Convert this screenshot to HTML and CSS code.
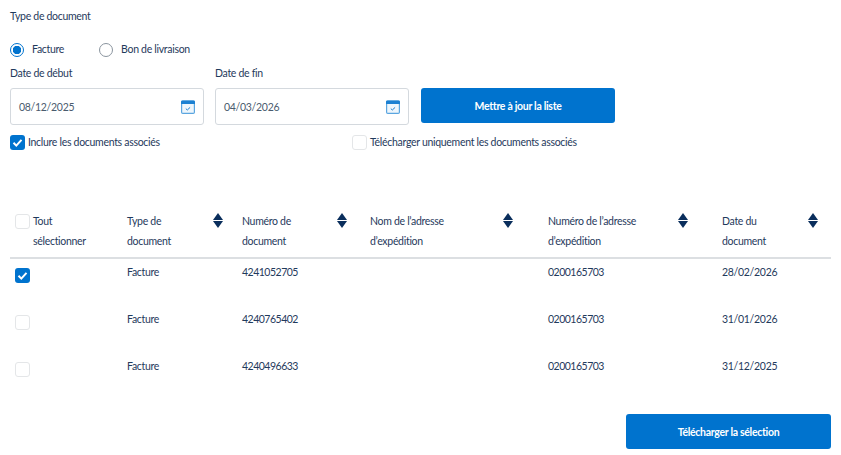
FILE: index.html
```html
<!DOCTYPE html>
<html lang="fr">

<head>
    <meta charset="UTF-8">
    <title>Documents</title>
    <link rel="stylesheet" href="styles.css">
</head>

<body>
    <div class="container">
        <div class="doc-type-label">Type de document</div>
        <div class="radios">
            <div class="radio-item checked"><span class="radio"></span>Facture</div>
            <div class="radio-item"><span class="radio"></span>Bon de livraison</div>
        </div>
        <div class="filters">
            <div class="field">
                <div class="field-label">Date de début</div>
                <div class="date-input">08/12/2025
                    <svg class="cal" viewBox="0 0 14 14"><rect x="0.6" y="1.1" width="12.8" height="12.3" rx="1.2" fill="#eef6fc" stroke="#5ba6e0" stroke-width="1.2"/><path d="M0 1.8q0-1.3 1.3-1.3h11.4q1.3 0 1.3 1.3v2.2h-14z" fill="#1b80d2"/><path d="M4.8 8.6l1.5 1.4 2.8-2.6" fill="none" stroke="#1b80d2" stroke-width="1"/></svg>
                </div>
            </div>
            <div class="field">
                <div class="field-label">Date de fin</div>
                <div class="date-input">04/03/2026
                    <svg class="cal" viewBox="0 0 14 14"><rect x="0.6" y="1.1" width="12.8" height="12.3" rx="1.2" fill="#eef6fc" stroke="#5ba6e0" stroke-width="1.2"/><path d="M0 1.8q0-1.3 1.3-1.3h11.4q1.3 0 1.3 1.3v2.2h-14z" fill="#1b80d2"/><path d="M4.8 8.6l1.5 1.4 2.8-2.6" fill="none" stroke="#1b80d2" stroke-width="1"/></svg>
                </div>
            </div>
            <button class="btn update-btn">Mettre à jour la liste</button>
        </div>
        <div class="options">
            <div class="option"><span class="check on"><svg viewBox="0 0 15 15"><path d="M3.5 7.8l2.8 2.8 5.2-5.8" fill="none" stroke="#fff" stroke-width="2"/></svg></span>Inclure les documents associés</div>
            <div class="option second"><span class="check"></span>Télécharger uniquement les documents associés</div>
        </div>

        <div class="table">
            <div class="row head">
                <div class="cell c1"><span class="check"></span><span class="head-text">Tout<br>sélectionner</span></div>
                <div class="cell c2"><span class="head-text">Type de<br>document</span><span class="sort"><i class="up"></i><i class="down"></i></span></div>
                <div class="cell c3"><span class="head-text">Numéro de<br>document</span><span class="sort"><i class="up"></i><i class="down"></i></span></div>
                <div class="cell c4"><span class="head-text">Nom de l’adresse<br>d’expédition</span><span class="sort"><i class="up"></i><i class="down"></i></span></div>
                <div class="cell c5"><span class="head-text">Numéro de l’adresse<br>d’expédition</span><span class="sort"><i class="up"></i><i class="down"></i></span></div>
                <div class="cell c6"><span class="head-text">Date du<br>document</span><span class="sort"><i class="up"></i><i class="down"></i></span></div>
            </div>
            <div class="row">
                <div class="cell c1"><span class="check on"><svg viewBox="0 0 15 15"><path d="M3.5 7.8l2.8 2.8 5.2-5.8" fill="none" stroke="#fff" stroke-width="2"/></svg></span></div>
                <div class="cell c2">Facture</div>
                <div class="cell c3 num">4241052705</div>
                <div class="cell c4"></div>
                <div class="cell c5 num">0200165703</div>
                <div class="cell c6 date">28/02/2026</div>
            </div>
            <div class="row">
                <div class="cell c1"><span class="check"></span></div>
                <div class="cell c2">Facture</div>
                <div class="cell c3 num">4240765402</div>
                <div class="cell c4"></div>
                <div class="cell c5 num">0200165703</div>
                <div class="cell c6 date">31/01/2026</div>
            </div>
            <div class="row">
                <div class="cell c1"><span class="check"></span></div>
                <div class="cell c2">Facture</div>
                <div class="cell c3 num">4240496633</div>
                <div class="cell c4"></div>
                <div class="cell c5 num">0200165703</div>
                <div class="cell c6 date">31/12/2025</div>
            </div>
        </div>

        <div class="footer">
            <button class="btn download-btn">Télécharger la sélection</button>
        </div>
    </div>
</body>

</html>
```

FILE: styles.css
```css
* {
    margin: 0;
    padding: 0;
    box-sizing: border-box;
    font-family: 'Lato', 'Liberation Sans', sans-serif;
}

body {
    background-color: white;
    color: #1f3a5c;
    font-size: 10.5px;
    letter-spacing: -0.3px;
    overflow: hidden;
}

.container {
    width: 841px;
    height: 455px;
    padding: 10px 10px 0 10px;
}

.doc-type-label {
    height: 12px;
    line-height: 12px;
}

.radios {
    display: flex;
    margin-top: 20px;
    height: 14px;
}

.radio-item {
    display: flex;
    align-items: flex-start;
    gap: 8px;
    margin-right: 35px;
    line-height: 14px;
}

.radio {
    width: 14px;
    height: 14px;
    border-radius: 50%;
    border: 1px solid #8a949e;
    margin-top: 1px;
}

.radio-item.checked .radio {
    border: 1.5px solid #0073ce;
    background: radial-gradient(circle, #0073ce 0 4px, white 4.5px);
}

.filters {
    display: flex;
    align-items: flex-end;
    gap: 11px;
    margin-top: 11px;
}

.field {
    width: 194px;
}

.field-label {
    height: 12px;
    line-height: 12px;
    margin-bottom: 9px;
}

.date-input {
    display: flex;
    align-items: center;
    justify-content: space-between;
    height: 37px;
    border: 1px solid #d4d9de;
    border-radius: 3px;
    padding: 0 8px 0 8px;
    color: #4a5b6e;
    letter-spacing: -0.3px;
}

.cal {
    width: 14px;
    height: 14px;
}

.btn {
    background-color: #0073ce;
    color: white;
    border: none;
    border-radius: 3px;
    font-size: 10.5px;
    font-weight: 700;
    letter-spacing: -0.3px;
}

.update-btn {
    width: 194px;
    height: 35px;
    margin-left: 1px;
    margin-bottom: 2px;
}

.options {
    display: flex;
    margin-top: 10px;
    height: 15px;
}

.option {
    display: flex;
    align-items: flex-start;
    gap: 3px;
    width: 342px;
    line-height: 14px;
}

.check {
    display: block;
    flex: none;
    width: 15px;
    height: 15px;
    border: 1.5px solid #e4e6e8;
    border-radius: 3px;
    background-color: white;
}

.check.on {
    background-color: #0073ce;
    border: none;
}

.check svg {
    display: block;
    width: 100%;
    height: 100%;
}

.table {
    margin-top: 48px;
}

.row {
    display: flex;
    align-items: flex-start;
    height: 47px;
    padding-top: 7px;
    line-height: 14px;
}

.row.head {
    height: 61px;
    margin-bottom: -1px;
    border-bottom: 2px solid #dcdfe2;
    line-height: 20px;
    padding-top: 15px;
}

.cell {
    display: flex;
    justify-content: space-between;
}

.num {
    letter-spacing: -0.5px;
}

.date {
    letter-spacing: -0.3px;
}

.c1 { width: 117px; padding-left: 5px; gap: 3px; justify-content: flex-start; }
.c2 { width: 115px; padding-right: 19px; }
.c3 { width: 128px; padding-right: 23px; }
.c4 { width: 178px; padding-right: 35px; }
.c5 { width: 174px; padding-right: 34px; }
.c6 { width: 109px; padding-right: 13px; }

.row .c1 .check {
    margin-top: 3px;
}

.row.head .c1 .check {
    margin-top: 1px;
}

.head-text {
    margin-top: -2px;
}

.sort {
    display: flex;
    flex-direction: column;
    gap: 1px;
}

.sort i {
    display: block;
    width: 0;
    height: 0;
    border-left: 5px solid transparent;
    border-right: 5px solid transparent;
}

.sort .up {
    border-bottom: 7px solid #0a2e5c;
}

.sort .down {
    border-top: 7px solid #0a2e5c;
}

.footer {
    display: flex;
    justify-content: flex-end;
    margin-top: 15px;
}

.download-btn {
    width: 205px;
    height: 35px;
}
```
